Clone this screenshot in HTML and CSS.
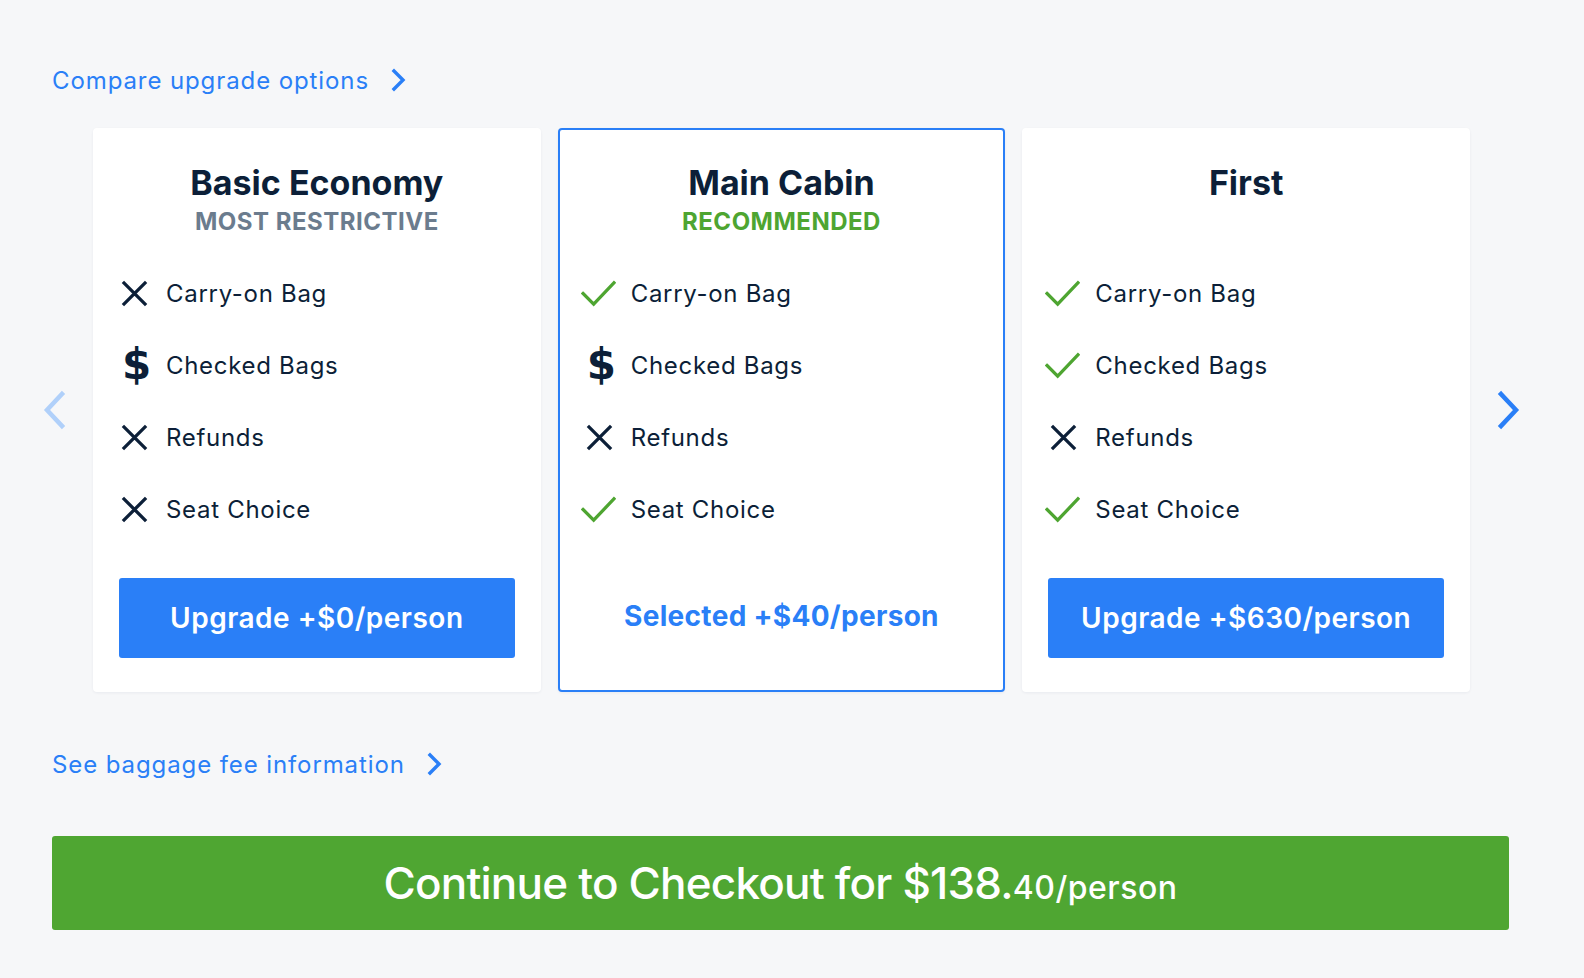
FILE: index.html
```html
<!DOCTYPE html>
<html lang="en">
<head>
<meta charset="utf-8">
<title>Compare upgrade options</title>
<link rel="stylesheet" href="styles.css">
</head>
<body>
<main class="page">
  <a class="link-row" href="#">
    <span>Compare upgrade options</span>
    <svg class="chev" viewBox="0 0 16 24" width="16" height="24"><path d="M4 3 L13 12 L4 21" /></svg>
  </a>

  <section class="carousel">
    <button class="arrow arrow-prev" aria-label="Previous">
      <svg viewBox="0 0 24 40" width="24" height="40"><path d="M20 4 L5 20 L20 36" /></svg>
    </button>

    <div class="cards">
      <article class="card">
        <header class="card-head">
          <h2 class="card-title">Basic Economy</h2>
          <p class="card-sub sub-gray">MOST RESTRICTIVE</p>
        </header>
        <ul class="features">
          <li><span class="ico"><svg class="x" viewBox="0 0 30 30"><path d="M3 3 L27 27 M27 3 L3 27"/></svg></span>Carry-on Bag</li>
          <li><span class="ico"><span class="dollar">$</span></span>Checked Bags</li>
          <li><span class="ico"><svg class="x" viewBox="0 0 30 30"><path d="M3 3 L27 27 M27 3 L3 27"/></svg></span>Refunds</li>
          <li><span class="ico"><svg class="x" viewBox="0 0 30 30"><path d="M3 3 L27 27 M27 3 L3 27"/></svg></span>Seat Choice</li>
        </ul>
        <button class="btn-upgrade">Upgrade +$0/person</button>
      </article>

      <article class="card card-selected">
        <header class="card-head">
          <h2 class="card-title">Main Cabin</h2>
          <p class="card-sub sub-green">RECOMMENDED</p>
        </header>
        <ul class="features">
          <li><span class="ico"><svg class="check" viewBox="0 0 36 30"><path d="M2 15 L13 26 L34 4"/></svg></span>Carry-on Bag</li>
          <li><span class="ico"><span class="dollar">$</span></span>Checked Bags</li>
          <li><span class="ico"><svg class="x" viewBox="0 0 30 30"><path d="M3 3 L27 27 M27 3 L3 27"/></svg></span>Refunds</li>
          <li><span class="ico"><svg class="check" viewBox="0 0 36 30"><path d="M2 15 L13 26 L34 4"/></svg></span>Seat Choice</li>
        </ul>
        <div class="selected-label">Selected +$40/person</div>
      </article>

      <article class="card">
        <header class="card-head">
          <h2 class="card-title">First</h2>
          <p class="card-sub">&nbsp;</p>
        </header>
        <ul class="features">
          <li><span class="ico"><svg class="check" viewBox="0 0 36 30"><path d="M2 15 L13 26 L34 4"/></svg></span>Carry-on Bag</li>
          <li><span class="ico"><svg class="check" viewBox="0 0 36 30"><path d="M2 15 L13 26 L34 4"/></svg></span>Checked Bags</li>
          <li><span class="ico"><svg class="x" viewBox="0 0 30 30"><path d="M3 3 L27 27 M27 3 L3 27"/></svg></span>Refunds</li>
          <li><span class="ico"><svg class="check" viewBox="0 0 36 30"><path d="M2 15 L13 26 L34 4"/></svg></span>Seat Choice</li>
        </ul>
        <button class="btn-upgrade">Upgrade +$630/person</button>
      </article>
    </div>

    <button class="arrow arrow-next" aria-label="Next">
      <svg viewBox="0 0 24 40" width="24" height="40"><path d="M4 4 L19 20 L4 36" /></svg>
    </button>
  </section>

  <a class="link-row link-bag" href="#">
    <span>See baggage fee information</span>
    <svg class="chev" viewBox="0 0 16 24" width="16" height="24"><path d="M4 3 L13 12 L4 21" /></svg>
  </a>

  <button class="btn-checkout"><span class="co-main">Continue to Checkout for $138.</span><span class="co-small">40/person</span></button>
</main>
</body>
</html>
```

FILE: styles.css
```css
* { box-sizing: border-box; }

body {
  margin: 0;
  background: #f6f7f9;
  font-family: Inter, "Noto Sans", sans-serif;
  color: #0c1f38;
}

.page {
  width: 1457px;
  margin-left: 52px;
  padding-top: 63px;
}

.link-row {
  display: inline-flex;
  align-items: center;
  gap: 21px;
  color: #2a7ff7;
  text-decoration: none;
  font-size: 24px;
  letter-spacing: 0.9px;
  height: 34px;
}

.chev path {
  fill: none;
  stroke: #2a7ff7;
  stroke-width: 3.4;
  stroke-linecap: square;
}

.carousel {
  display: flex;
  align-items: center;
  gap: 21px;
  margin: 31px -18px 0 -16px;
}

.arrow {
  width: 36px;
  height: 60px;
  padding: 0;
  border: 0;
  background: none;
  display: flex;
  align-items: center;
  justify-content: center;
}

.arrow path {
  fill: none;
  stroke-width: 4.5;
  stroke-linecap: square;
}
.arrow-prev path { stroke: #b0d0fa; }
.arrow-next path { stroke: #2a7ff7; }

.cards {
  flex: 1;
  display: grid;
  grid-template-columns: repeat(3, 1fr);
  gap: 17px;
}

.card {
  background: #fff;
  border: 2px solid #fff;
  border-radius: 4px;
  box-shadow: 0 1px 3px rgba(20, 40, 80, 0.06);
  padding: 33px 24px 32px 24px;
  display: flex;
  flex-direction: column;
}

.card-selected {
  border-color: #2a7ff7;
}

.card-head {
  text-align: center;
}

.card-title {
  margin: 0;
  font-size: 34px;
  line-height: 40px;
  font-weight: 700;
  color: #0c1f38;
}

.card-sub {
  margin: 0;
  font-size: 24px;
  line-height: 38px;
  font-weight: 700;
  letter-spacing: 0.5px;
}
.sub-gray { color: #6b7c8e; }
.sub-green { color: #4ea531; }

.features {
  list-style: none;
  margin: 16px 0 0 0;
  padding: 0 0 0 1px;
}

.features li {
  display: flex;
  align-items: center;
  height: 72px;
  font-size: 24px;
  letter-spacing: 0.7px;
}

.ico {
  width: 46px;
  flex: 0 0 46px;
  display: flex;
  align-items: center;
}

.ico svg path {
  fill: none;
  stroke-width: 3.4;
}

.x { width: 29px; height: 29px; }
.x path { stroke: #0c1f38; }
.check { width: 35px; height: 29px; margin-left: -4px; }
.check path { stroke: #4ea531; stroke-linecap: square; }

.dollar {
  font-family: "DejaVu Sans", sans-serif;
  font-weight: 700;
  font-size: 42px;
  line-height: 1;
  color: #0c1f38;
  margin-left: 2px;
}

.btn-upgrade {
  margin-top: 33px;
  height: 80px;
  border: 0;
  border-radius: 3px;
  background: #2a7ff7;
  color: #fff;
  font-family: Inter, "Noto Sans", sans-serif;
  font-size: 28px;
  font-weight: 600;
  letter-spacing: 0.5px;
}

.selected-label {
  margin-top: 33px;
  height: 80px;
  padding-bottom: 4px;
  display: flex;
  align-items: center;
  justify-content: center;
  color: #2a7ff7;
  font-size: 28px;
  font-weight: 700;
  letter-spacing: 0.3px;
}

.link-bag {
  margin-top: 55px;
}

.btn-checkout {
  display: block;
  width: 100%;
  height: 94px;
  margin-top: 55px;
  padding: 0;
  border: 0;
  border-radius: 3px;
  background: #4fa632;
  color: #fff;
  font-family: Inter, "Noto Sans", sans-serif;
  font-weight: 500;
  text-align: center;
}
.co-main { font-size: 44px; letter-spacing: -0.8px; }
.co-small { font-size: 32px; letter-spacing: 0.5px; }
```
